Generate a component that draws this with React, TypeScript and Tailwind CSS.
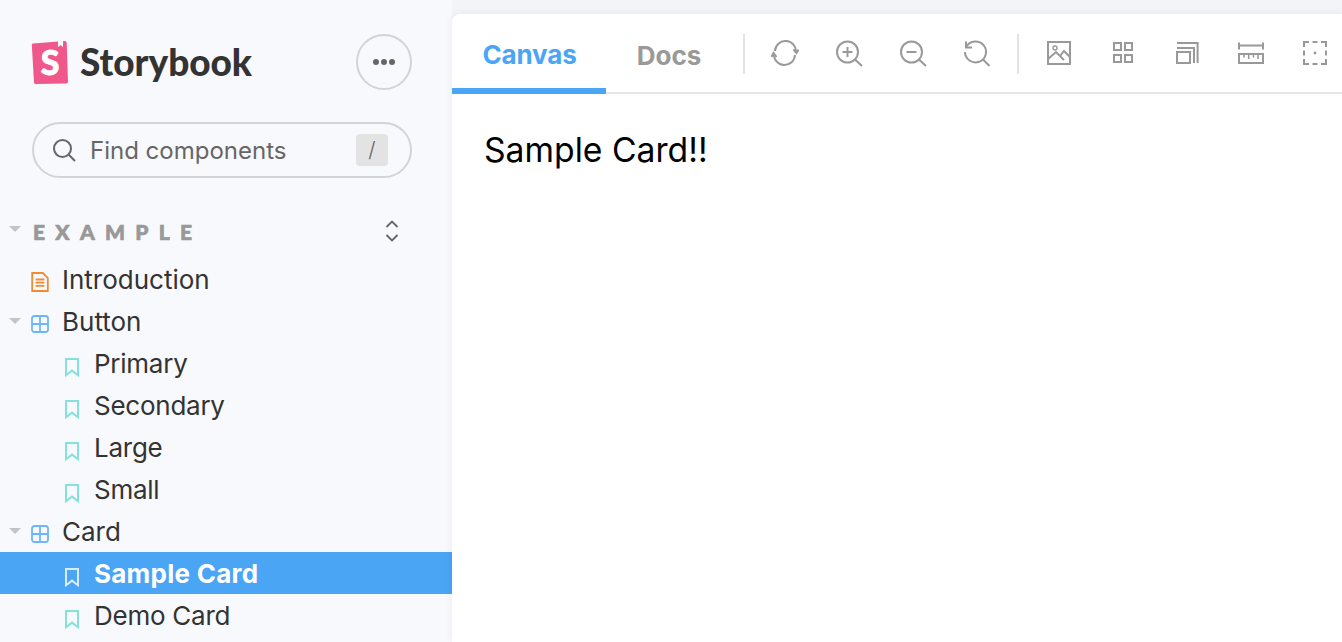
import React from "react";

const Caret = () => (
  <svg width="12" height="6" viewBox="0 0 12 6" className="block">
    <path d="M0 0h12L6 6z" fill="#c4c4c4" />
  </svg>
);

const Doc = () => (
  <svg width="18" height="20" viewBox="0 0 18 20" fill="none" stroke="#f38a30" strokeWidth="1.8">
    <path d="M1.2 1h10.6l5 5v13H1.2z" />
    <path d="M4.6 7.5h8.8M4.6 10.7h8.8M4.6 13.9h8.8" />
  </svg>
);

const Comp = () => (
  <svg width="18" height="18" viewBox="0 0 18 18" fill="none" stroke="#6cb6fb" strokeWidth="1.8">
    <rect x="1" y="1" width="16" height="16" rx="2.5" />
    <path d="M9 1v16M1 9h16" />
  </svg>
);

const Mark = ({ color }: { color: string }) => (
  <svg width="14" height="19" viewBox="0 0 14 19" fill="none" stroke={color} strokeWidth="2">
    <path d="M1 1h12v16.2L7 12.6 1 17.2z" />
  </svg>
);

const I = ({ children }: { children: React.ReactNode }) => (
  <div className="w-[64px] h-full flex items-center justify-center shrink-0">
    <svg width="28" height="28" viewBox="0 0 28 28" fill="none" stroke="#999999" strokeWidth="2">
      {children}
    </svg>
  </div>
);

const Row = ({
  label,
  icon,
  caret,
  depth,
  selected,
  doc,
}: {
  label: string;
  icon: React.ReactNode;
  caret?: boolean;
  depth: number;
  selected?: boolean;
  doc?: boolean;
}) => (
  <div
    className={`h-[42px] flex items-center shrink-0 ${selected ? "bg-[#4aa5f5] text-white font-bold tracking-[0.25px]" : "text-[#333333]"} ${depth === 1 ? "pl-[64px]" : "pl-[9px]"} ${depth === 1 && !selected ? "tracking-[-0.25px]" : ""}`}
  >
    {depth === 0 && (
      <div className="w-[22px] shrink-0">{caret && <Caret />}</div>
    )}
    <div className={`shrink-0 flex justify-start ${depth === 1 ? "w-[30px] pl-[1px] pt-[9px]" : doc ? "w-[31px] pt-[6px]" : "w-[31px] pt-[6px]"}`}>
      {icon}
    </div>
    <span className="text-[26px] leading-[42px] pt-[2px]">{label}</span>
  </div>
);

export default function App() {
  const teal = "#84e1dc";
  return (
    <div className="flex w-[1342px] h-[642px] overflow-hidden bg-[#f8f9fd] font-['Inter',sans-serif]">
      <aside className="w-[452px] shrink-0 flex flex-col">
        <div className="h-[122px] pl-[31px] pr-[40px] pt-[34px] flex items-start justify-between shrink-0">
          <div className="flex items-center h-[56px] gap-[12px]">
            <svg width="37" height="46" viewBox="0 0 37 46">
              <path d="M2 4.4 L34 2 Q35.6 2 35.7 3.6 L37 43 Q37 44.4 35.4 44.5 L4.5 45 Q3 45 3 43.6 L0.8 5.8 Q0.8 4.5 2 4.4 Z" fill="#f0588c" />
              <path d="M27 2 L27 8 L29.5 6 L32 8 L32 1.8 Z" fill="#ffffff" />
              <text x="19" y="36" textAnchor="middle" fontFamily="Lato, sans-serif" fontWeight="900" fontSize="34" fill="#ffffff" stroke="#ffffff" strokeWidth="0.8">S</text>
            </svg>
            <span className="text-[37px] leading-none font-black text-[#333333] font-['Lato',sans-serif] tracking-[-0.05px] pb-[2px]">Storybook</span>
          </div>
          <div className="w-[56px] h-[56px] rounded-full border-2 border-[#d2d4d8] flex items-center justify-center gap-[2px]">
            <span className="w-[6px] h-[6px] rounded-full bg-[#666666]" />
            <span className="w-[6px] h-[6px] rounded-full bg-[#666666]" />
            <span className="w-[6px] h-[6px] rounded-full bg-[#666666]" />
          </div>
        </div>
        <div className="ml-[32px] mr-[40px] h-[56px] rounded-[28px] border-2 border-[#d2d4d8] flex items-center pl-[18px] pr-[22px] shrink-0">
          <svg width="24" height="24" viewBox="0 0 24 24" fill="none" stroke="#666666" strokeWidth="2">
            <circle cx="10.5" cy="10.5" r="8.5" />
            <path d="M16.8 16.8 L23 23" />
          </svg>
          <span className="ml-[14px] text-[24px] text-[#666666] flex-1 pt-[2px]">Find components</span>
          <span className="w-[32px] h-[32px] rounded-[4px] bg-[#e3e3e3] flex items-center justify-center text-[#666666] text-[21px] font-light">/</span>
        </div>
        <div className="h-[38px] mt-[34px] pl-[9px] pr-[53px] flex items-center shrink-0">
          <div className="w-[24px] shrink-0 pb-[4px]"><Caret /></div>
          <span className="flex-1 text-[21px] font-black text-[#999999] tracking-[10.3px] pt-[2px] font-['Lato',sans-serif] [-webkit-text-stroke:0.7px_#999999]">EXAMPLE</span>
          <svg width="14" height="24" viewBox="0 0 14 24" fill="none" stroke="#666666" strokeWidth="1.8" className="mt-[0px]">
            <path d="M1.5 8 L7 2.5 L12.5 8M1.5 16 L7 21.5 L12.5 16" />
          </svg>
        </div>
        <div className="mt-[8px] flex flex-col">
          <Row depth={0} doc label="Introduction" icon={<Doc />} />
          <Row depth={0} caret label="Button" icon={<Comp />} />
          <Row depth={1} label="Primary" icon={<Mark color={teal} />} />
          <Row depth={1} label="Secondary" icon={<Mark color={teal} />} />
          <Row depth={1} label="Large" icon={<Mark color={teal} />} />
          <Row depth={1} label="Small" icon={<Mark color={teal} />} />
          <Row depth={0} caret label="Card" icon={<Comp />} />
          <Row depth={1} selected label="Sample Card" icon={<Mark color="#d8ecfd" />} />
          <Row depth={1} label="Demo Card" icon={<Mark color={teal} />} />
        </div>
      </aside>
      <main className="flex-1 pt-[14px] min-w-0 bg-[#f3f4f8]">
        <div className="h-full bg-white rounded-tl-[8px] shadow-[0_0_8px_rgba(0,0,0,0.06)] flex flex-col">
          <div className="h-[80px] border-b-2 border-[#e6e6e6] flex shrink-0 box-border">
            <div className="w-[154px] h-[80px] border-b-[6px] border-[#4aa5f5] flex items-center justify-center text-[26px] font-bold text-[#4aa5f5] shrink-0 tracking-[-0.15px]">
              <span className="pt-[6px] pl-[1px]">Canvas</span>
            </div>
            <div className="w-[126px] h-[78px] flex items-center justify-center text-[26px] font-bold text-[#999999] shrink-0">
              <span className="pt-[4px]">Docs</span>
            </div>
            <div className="w-[2px] h-[40px] mt-[20px] bg-[#e3e3e3] mr-[9px] ml-[11px] shrink-0" />
            <div className="flex h-[78px] pt-[2px] ml-[-1px]">
              <I>
                <path d="M4 11 A10.5 10.5 0 0 1 25 12" />
                <path d="M22.5 9.5 L25.5 13 L27.5 9.5" />
                <path d="M24 15 A10.5 10.5 0 0 1 3 14" />
                <path d="M5.5 17 L2.5 13 L0.5 17" />
              </I>
              <I>
                <circle cx="12.5" cy="12" r="10.5" />
                <path d="M20 19.5 L27 26M12.5 7v10M7.5 12h10" />
              </I>
              <I>
                <circle cx="12.5" cy="12" r="10.5" />
                <path d="M20 19.5 L27 26M7.5 12h10" />
              </I>
              <I>
                <path d="M3.5 6.5 A10.5 10.5 0 1 1 2 12" />
                <path d="M3 1.5 L3 7.5 L9 7.5M20 19.5 L26.5 26" />
              </I>
            </div>
            <div className="w-[2px] h-[40px] mt-[20px] bg-[#e3e3e3] ml-[8px] mr-[8px] shrink-0" />
            <div className="flex h-[78px] pt-[2px]">
              <I>
                <rect x="3" y="2" width="22" height="22" />
                <circle cx="10" cy="8" r="2" strokeWidth="1.4" />
                <path d="M3 19 L11 12 L19 20M15 16 L19 11 L25 17" />
              </I>
              <I>
                <rect x="5" y="3" width="7" height="7" />
                <rect x="16" y="3" width="7" height="7" />
                <rect x="5" y="15" width="7" height="7" />
                <rect x="16" y="15" width="7" height="7" />
              </I>
              <I>
                <rect x="4" y="12" width="13" height="11" />
                <path d="M4 8 H21 V23M4 3 H24.6 V23" />
              </I>
              <I>
                <path d="M2 2.5v7M26 2.5v7M2 5.5h24" />
                <rect x="2" y="14" width="24" height="9" />
                <path d="M7 14v3.5M11.7 14v5M16.4 14v3.5M21 14v5" strokeWidth="1.6" />
              </I>
              <I>
                <path d="M3 7V2h5M11.5 2h5M20 2h5v5M25 10.5v5M25 19v5h-5M16.5 24h-5M8 24H3v-5M3 15.5v-5" />
                <circle cx="14" cy="13" r="1.4" fill="#999999" stroke="none" />
              </I>
            </div>
          </div>
          <div className="pl-[32px] pt-[32px] text-[33.7px] leading-[48px] text-black">Sample Card!!</div>
        </div>
      </main>
    </div>
  );
}
